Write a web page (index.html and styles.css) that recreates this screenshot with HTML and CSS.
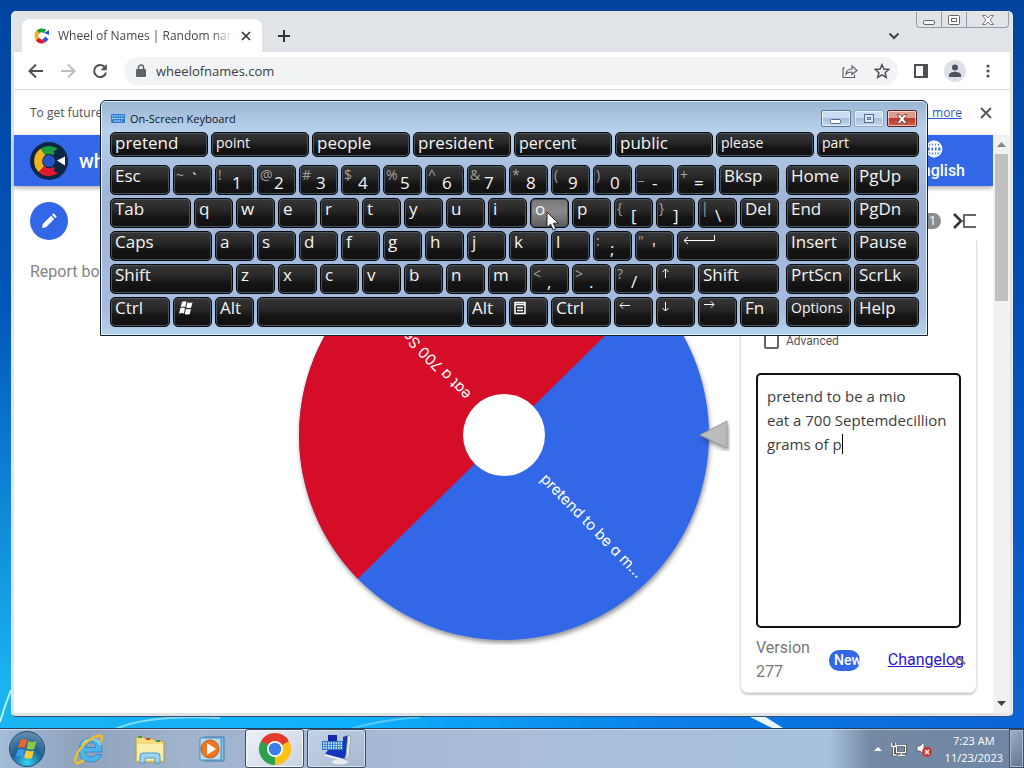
FILE: index.html
```html
<!DOCTYPE html>
<html lang="en">
<head>
<meta charset="utf-8">
<title>Wheel of Names</title>
<link rel="stylesheet" href="styles.css">
</head>
<body class="desktop">
<svg class="streaks" viewBox="0 0 1024 768" preserveAspectRatio="none" aria-hidden="true">
  <path d="M0 722Q5 705 11 690" stroke="#b9f3d8" stroke-width="2" fill="none"/>
  <path d="M115 729Q150 714 220 718" stroke="#7fdcfb" stroke-width="2" fill="none"/>
  <path d="M350 729Q380 720 420 717" stroke="#57c8fa" stroke-width="2" fill="none"/>
  <path d="M748 716L776 730H786L764 716Z" fill="#e8f6ff"/>
</svg>

<main class="browser">
  <div class="tabstrip">
    <div class="tab">
      <svg class="favicon" viewBox="0 0 16 16" aria-hidden="true"><g fill="none" stroke-width="4"><path d="M11 3.5A5.5 5.5 0 0 0 4 4" stroke="#1b9a3e"/><path d="M4 4A5.5 5.5 0 0 0 3.5 11" stroke="#f2b01d"/><path d="M3.5 11A5.5 5.5 0 0 0 10 13" stroke="#df1b2c"/><path d="M10 13L13 10" stroke="#2854d8"/></g><path d="M10 5l5-3v5z" fill="#2854d8"/></svg>
      <span class="tab-title">Wheel of Names | Random name picker</span>
      <button class="icon-btn" aria-label="Close tab"><svg width="10" height="10" viewBox="0 0 10 10"><path d="M1 1l8 8M9 1L1 9" stroke="#333" stroke-width="1.700"/></svg></button>
    </div>
    <button class="icon-btn new-tab" aria-label="New tab"><svg width="14" height="14" viewBox="0 0 14 14"><path d="M7 1v12M1 7h12" stroke="#333" stroke-width="2"/></svg></button>
    <button class="icon-btn tab-search" aria-label="Search tabs"><svg width="12" height="8" viewBox="0 0 12 8"><path d="M1.500 1.500L6 6l4.500-4.500" fill="none" stroke="#444" stroke-width="2"/></svg></button>
    <div class="caption">
      <button aria-label="Minimize"><svg width="14" height="14" viewBox="0 0 14 14"><rect x="1.500" y="7.500" width="11" height="4" rx="1.500" fill="#fff" stroke="#666"/></svg></button>
      <button aria-label="Maximize"><svg width="14" height="14" viewBox="0 0 14 14"><rect x="1.500" y="2.500" width="11" height="9" rx="1" fill="#fff" stroke="#666"/><rect x="4.500" y="5.500" width="5" height="3" fill="none" stroke="#666"/></svg></button>
      <button class="wide" aria-label="Close"><svg width="14" height="14" viewBox="0 0 14 14"><path d="M1.500 2.500h3L7 5l2.500-2.500h3L9 7l3.500 4.500h-3L7 9l-2.500 2.500h-3L5 7z" fill="#fff" stroke="#777"/></svg></button>
    </div>
  </div>

  <div class="toolbar">
    <button class="icon-btn" aria-label="Back"><svg width="16" height="16" viewBox="0 0 16 16"><path d="M15 8H2M8 1.500L1.500 8 8 14.500" fill="none" stroke="#4d5156" stroke-width="2"/></svg></button>
    <button class="icon-btn" aria-label="Forward"><svg width="16" height="16" viewBox="0 0 16 16"><path d="M1 8h13M8 1.500L14.500 8 8 14.500" fill="none" stroke="#bcbec1" stroke-width="2"/></svg></button>
    <button class="icon-btn" aria-label="Reload"><svg width="16" height="16" viewBox="0 0 16 16"><path d="M13 4.500A6 6 0 1 0 14 9.500" fill="none" stroke="#4d5156" stroke-width="2"/><path d="M14.800 1v6.200H8.600z" fill="#4d5156"/></svg></button>
    <div class="omnibox">
      <svg width="10" height="14" viewBox="0 0 10 14" aria-hidden="true"><rect y="5" width="10" height="8" rx="1" fill="#5f6368"/><path d="M2.500 6V3.500a2.500 2.500 0 0 1 5 0V6" fill="none" stroke="#5f6368" stroke-width="1.500"/></svg>
      <input class="url" type="text" value="wheelofnames.com" aria-label="Address">
      <button class="icon-btn" aria-label="Share"><svg width="16" height="16" viewBox="0 0 16 16"><path d="M3 5H1v9.500h11.500V12M4 11c.5-3.500 3-5 6-5V3l5 4.500-5 4V9c-3 0-4.500.5-6 2z" fill="none" stroke="#5f6368" stroke-width="1.200"/></svg></button>
      <button class="icon-btn" aria-label="Bookmark"><svg width="16" height="16" viewBox="0 0 16 16"><path d="M8 1.700l1.900 4.400 4.800.4-3.600 3.200 1.100 4.700L8 11.900l-4.200 2.500 1.100-4.700-3.600-3.200 4.800-.4z" fill="none" stroke="#4d5156" stroke-width="1.500"/></svg></button>
    </div>
    <button class="icon-btn" aria-label="Side panel"><svg width="14" height="14" viewBox="0 0 14 14"><path d="M1 1h12v12H1z" fill="none" stroke="#4d5156" stroke-width="2"/><path d="M9 1h4v12H9z" fill="#4d5156"/></svg></button>
    <button class="icon-btn" aria-label="Profile"><svg width="22" height="22" viewBox="0 0 22 22"><circle cx="11" cy="11" r="11" fill="#dde1e7"/><circle cx="11" cy="7.500" r="3" fill="#4d5460"/><path d="M5 17v-2c0-2.500 4-3.300 6-3.300s6 .8 6 3.300v2z" fill="#4d5460"/></svg></button>
    <button class="icon-btn menu" aria-label="Menu"><svg width="4" height="14" viewBox="0 0 4 14"><g fill="#4d5156"><circle cx="2" cy="2" r="1.600"/><circle cx="2" cy="7" r="1.600"/><circle cx="2" cy="12" r="1.600"/></g></svg></button>
  </div>

  <div class="infobar">
    <span>To get future</span>
    <a class="learn" href="#more">Learn more</a>
    <button class="icon-btn" aria-label="Dismiss"><svg width="12" height="12" viewBox="0 0 12 12"><path d="M1 1l10 10M11 1L1 11" stroke="#555" stroke-width="1.800"/></svg></button>
  </div>

  <div class="viewport">
    <div class="page">
      <header class="site-header">
        <svg width="38" height="38" viewBox="0 0 38 38" aria-hidden="true"><circle cx="19" cy="19" r="19" fill="#0d2646"/><g fill="none" stroke-width="8"><path d="M12.800 10.100A11 11 0 0 1 25.500 10.100" stroke="#1d9c3f"/><path d="M11.500 27A11 11 0 0 1 12.800 10.100" stroke="#f0b41c"/><path d="M25.500 28A11 11 0 0 1 11.500 27" stroke="#df1b2c"/></g><circle cx="19" cy="19" r="6" fill="#2454c4"/><path d="M25 12l5-3M25 26l5 3" stroke="#0d2646" stroke-width="6"/><path d="M27 18.500l8-4v9z" fill="#fff"/></svg>
        <strong class="brand">wheel</strong>
        <button class="lang"><svg width="18" height="18" viewBox="0 0 18 18" aria-hidden="true"><g fill="none" stroke="#fff" stroke-width="1.800"><circle cx="9" cy="9" r="7.500"/><ellipse cx="9" cy="9" rx="3.500" ry="7.500"/><path d="M2 6.500h14M2 11.500h14M9 1v16"/></g></svg>English</button>
      </header>

      <div class="content">
        <aside class="tools">
          <button class="edit" aria-label="Customize"><svg width="20" height="20" viewBox="0 0 20 20"><path d="M3 17l.8-4L12 4.800 15.200 8 7 16.200zM13 3.800l1.600-1.600 3.200 3.200L16.200 7z" fill="#fff"/></svg></button>
          <a class="report" href="#report">Report bo</a>
        </aside>

        <svg class="wheel" viewBox="0 0 450 420" role="img" aria-label="Wheel">
          <defs>
            <filter id="shade" x="-10%" y="-10%" width="120%" height="120%"><feDropShadow dx="1" dy="3" stdDeviation="2" flood-color="#333" flood-opacity=".5"/></filter>
          </defs>
          <g filter="url(#shade)">
            <circle cx="214" cy="210" r="205" fill="#3267e8"/>
            <path d="M360.200 66.300A205 205 0 0 0 67.800 66.300A205 205 0 0 0 67.800 353.700z" fill="#d60f26"/>
          </g>
          <circle cx="214" cy="210" r="41" fill="#fff"/>
          <g class="wheel-text">
            <text transform="translate(214 210) rotate(45.500)" x="57" y="6">pretend to be a m...</text>
            <text transform="translate(214 210) rotate(225.500)" x="52" y="6">eat a 700 Se</text>
          </g>
          <path d="M410 210l27-14v27z" fill="#bbb" stroke="#999" filter="url(#shade)"/>
        </svg>

        <section class="panel">
          <div class="panel-top">
            <span class="badge">1</span>
            <button class="icon-btn" aria-label="Hide panel"><svg width="24" height="18" viewBox="0 0 24 18"><path d="M1 2l7 7-7 7" fill="none" stroke="#333" stroke-width="2.600"/><path d="M23 3H11v12h12M8 9h3" fill="none" stroke="#666" stroke-width="2"/></svg></button>
          </div>
          <div class="card">
            <label class="advanced"><input type="checkbox">Advanced</label>
            <div class="entry">
              <textarea aria-label="Entries" spellcheck="false">pretend to be a mio
eat a 700 Septemdecillion
grams of p</textarea>
              <i class="caret"></i>
            </div>
            <footer class="card-foot">
              <span class="version">Version 277</span>
              <span class="new">New</span>
              <a class="changelog" href="#changelog">Changelog</a>
              <svg class="chev" width="14" height="10" viewBox="0 0 14 10" aria-hidden="true"><path d="M1 8l6-6 6 6" fill="none" stroke="#777" stroke-width="2"/></svg>
            </footer>
          </div>
        </section>
      </div>
    </div>
    <div class="scroll" aria-hidden="true">
      <svg width="9" height="5" viewBox="0 0 9 5"><path d="M0 5l4.500-5L9 5z" fill="#888"/></svg>
      <div class="thumb"></div>
      <svg class="down" width="9" height="5" viewBox="0 0 9 5"><path d="M0 0h9L4.500 5z" fill="#444"/></svg>
    </div>
  </div>
</main>

<section class="osk">
  <div class="osk-title">
    <svg width="14" height="9" viewBox="0 0 14 9" aria-hidden="true"><rect width="14" height="9" rx="1" fill="#2c7fd0"/><path d="M1 2h12M1 4.500h12M3 7h8" stroke="#e6f3ff" stroke-dasharray="1.500 .8"/></svg>
    <span>On-Screen Keyboard</span>
    <div class="osk-caption">
      <button aria-label="Minimize keyboard"><svg width="14" height="14" viewBox="0 0 14 14"><rect x="1.500" y="7.500" width="10" height="4" rx="1" fill="#fff" stroke="#556b8a"/></svg></button>
      <button class="dim" aria-label="Maximize keyboard"><svg width="14" height="14" viewBox="0 0 14 14"><rect x="2.500" y="2.500" width="9" height="8" fill="#dce8f5" stroke="#556b8a"/><rect x="5.500" y="5.500" width="3" height="2" fill="none" stroke="#556b8a"/></svg></button>
      <button class="red" aria-label="Close keyboard"><svg width="14" height="14" viewBox="0 0 14 14"><path d="M2 2.500h3L7 5l2-2.500h3L8.800 7l3.200 4.500H9L7 9l-2 2.500H2L5.200 7z" fill="#fff" stroke="#6d3838" stroke-width=".8"/></svg></button>
    </div>
  </div>
  <div class="predict">
    <button class="key">pretend</button><button class="key small">point</button><button class="key">people</button><button class="key">president</button><button class="key mid">percent</button><button class="key">public</button><button class="key small">please</button><button class="key small">part</button>
  </div>
  <div class="boards">
    <div class="board">
      <div class="row">
        <button class="key k60">Esc</button><button class="key two flat"><sup>~</sup><b>`</b></button><button class="key two"><sup>!</sup><b>1</b></button><button class="key two"><sup>@</sup><b>2</b></button><button class="key two"><sup>#</sup><b>3</b></button><button class="key two"><sup>$</sup><b>4</b></button><button class="key two"><sup>%</sup><b>5</b></button><button class="key two"><sup>^</sup><b>6</b></button><button class="key two"><sup>&amp;</sup><b>7</b></button><button class="key two"><sup>*</sup><b>8</b></button><button class="key two"><sup>(</sup><b>9</b></button><button class="key two"><sup>)</sup><b>0</b></button><button class="key two"><sup>_</sup><b>-</b></button><button class="key two"><sup>+</sup><b>=</b></button><button class="key k60">Bksp</button>
      </div>
      <div class="row">
        <button class="key k81">Tab</button><button class="key">q</button><button class="key">w</button><button class="key">e</button><button class="key">r</button><button class="key">t</button><button class="key">y</button><button class="key">u</button><button class="key">i</button><button class="key hover">o</button><button class="key">p</button><button class="key two"><sup>{</sup><b>[</b></button><button class="key two"><sup>}</sup><b>]</b></button><button class="key two"><sup>|</sup><b>\</b></button><button class="key">Del</button>
      </div>
      <div class="row">
        <button class="key k102">Caps</button><button class="key">a</button><button class="key">s</button><button class="key">d</button><button class="key">f</button><button class="key">g</button><button class="key">h</button><button class="key">j</button><button class="key">k</button><button class="key">l</button><button class="key two"><sup>:</sup><b>;</b></button><button class="key two"><sup>"</sup><b>'</b></button><button class="key k102" aria-label="Enter"><svg width="34" height="16" viewBox="0 0 34 16"><path d="M32.500 3v5.500H2M6 5L2 8.500 6 12" fill="none" stroke="#fff"/></svg></button>
      </div>
      <div class="row">
        <button class="key k123">Shift</button><button class="key">z</button><button class="key">x</button><button class="key">c</button><button class="key">v</button><button class="key">b</button><button class="key">n</button><button class="key">m</button><button class="key two"><sup>&lt;</sup><b>,</b></button><button class="key two"><sup>&gt;</sup><b>.</b></button><button class="key two"><sup>?</sup><b>/</b></button><button class="key" aria-label="Up"><svg width="10" height="16" viewBox="0 0 10 16"><path d="M4.500 13V4M1.500 7L4.500 4l3 3" fill="none" stroke="#fff"/></svg></button><button class="key k81">Shift</button>
      </div>
      <div class="row">
        <button class="key k60">Ctrl</button><button class="key" aria-label="Windows"><svg width="16" height="18" viewBox="0 0 16 18"><path d="M4 4q2-1.500 4.500-.3L7.300 9Q5 8 2.700 9.200zM9.500 4.200q2.500 1.200 5 0L13.200 9.500q-2.500 1-5 0zM2.500 10q2.300-1 4.500.2L6 15.500q-2.500-1.200-5 0zM8 10.800q2.500 1 5 0L11.800 16q-2.500 1-5 0z" fill="#fff"/></svg></button><button class="key">Alt</button><button class="key k207" aria-label="Space"></button><button class="key">Alt</button><button class="key" aria-label="Menu key"><svg width="12" height="17" viewBox="0 0 12 17"><path d="M1 4.500h10v11H1zM1 6.500h10M3 9.500h6M3 12.500h6" fill="none" stroke="#fff" stroke-width="1.500"/></svg></button><button class="key k60">Ctrl</button><button class="key" aria-label="Left"><svg width="12" height="16" viewBox="0 0 12 16"><path d="M11 7.500H1M4 4.500L1 7.500l3 3" fill="none" stroke="#fff"/></svg></button><button class="key" aria-label="Down"><svg width="10" height="16" viewBox="0 0 10 16"><path d="M4.500 4v9M1.500 10l3 3 3-3" fill="none" stroke="#fff"/></svg></button><button class="key" aria-label="Right"><svg width="12" height="16" viewBox="0 0 12 16"><path d="M1 6.500h10M8 3.500l3 3-3 3" fill="none" stroke="#fff"/></svg></button><button class="key">Fn</button>
      </div>
    </div>
    <div class="navpad">
      <button class="key">Home</button><button class="key">PgUp</button><button class="key">End</button><button class="key">PgDn</button><button class="key">Insert</button><button class="key">Pause</button><button class="key">PrtScn</button><button class="key">ScrLk</button><button class="key small">Options</button><button class="key">Help</button>
    </div>
  </div>
</section>

<svg class="pointer" width="13" height="20" viewBox="0 0 13 20" aria-hidden="true"><path d="M1 1v15.500l3.600-3.300 2.600 5.800 2.600-1.200-2.500-5.600h4.900z" fill="#fff" stroke="#222"/></svg>

<nav class="taskbar">
  <button class="orb" aria-label="Start"><svg width="38" height="38" viewBox="0 0 38 38"><defs><radialGradient id="orb" cx=".5" cy=".9" r=".9"><stop offset="0" stop-color="#35d3f5"/><stop offset=".5" stop-color="#1c6296"/><stop offset="1" stop-color="#6c8fae"/></radialGradient></defs><circle cx="19" cy="19" r="17.500" fill="url(#orb)" stroke="#23496b"/><path d="M12.500 10.500q3-2.500 6.500-.5l-2 8q-3.500-1.500-7 .3z" fill="#f0652c"/><path d="M20.500 11q4 2 8-.3l-2 8q-4 1.800-8-.2z" fill="#8fc73e"/><path d="M9.500 20q3.500-1.800 7-.3l-1.800 7q-3.500-1.500-6.700.3z" fill="#35a0e8"/><path d="M18 20.300q4 2 8 .2l-2 7.500q-4 1.500-7.800-.5z" fill="#fdc92f"/></svg></button>
  <button class="task" aria-label="Internet Explorer"><svg width="34" height="34" viewBox="0 0 34 34"><path fill-rule="evenodd" d="M30 20H13.500q.5 5 5.500 5 3.500 0 5-2.500h5.500Q27 30 18.500 30 7 29 7 18 8 6 19 6q11.500 1 11 14zM13.500 15.500h10.500q-.5-5-5-5t-5.500 5z" fill="#4fb4ea" stroke="#2583c4" stroke-width=".8"/><path d="M10 13q3-6 9-6 7 0 9.500 6" fill="none" stroke="#a4e4fb" stroke-width="1.500"/><path d="M4 31C0 26 12 7 27 3.500c4-.5 3.500 3 1.500 6M4 31q3 1 8-3" fill="none" stroke="#f1bd2a" stroke-width="2.400"/></svg></button>
  <button class="task" aria-label="Explorer"><svg width="34" height="34" viewBox="0 0 34 34"><path d="M2 5h8l2 2h8l2 2h8v21H2z" fill="#f2dd82" stroke="#b99945"/><path d="M4 5h4M22 9h4" stroke="#3c9c57" stroke-width="2"/><path d="M12 7h4" stroke="#d04a2a" stroke-width="2"/><path d="M3 12h26v16H3z" fill="#faeeae"/><path d="M6 31v-7q0-3 3-3h14q3 0 3 3v7h-5v-5H11v5z" fill="#9bd2ee" stroke="#4b9cc9"/></svg></button>
  <button class="task" aria-label="Media Player"><svg width="34" height="34" viewBox="0 0 34 34"><path d="M8 5h20v24H8z" fill="#83bde0" stroke="#3d7ba8"/><path d="M4 6h21v22H4z" fill="#b8dcf0" stroke="#4b8ebb"/><circle cx="14" cy="17" r="9" fill="#ee7722" stroke="#c45c12"/><path d="M11 11l9 6-9 6z" fill="#fff"/></svg></button>
  <button class="task open" aria-label="Chrome"><svg width="34" height="34" viewBox="0 0 34 34"><path d="M17 17L3.100 9A16 16 0 0 1 30.900 9z" fill="#e33b2e"/><path d="M17 17L30.900 9A16 16 0 0 1 17 33z" fill="#fbc116"/><path d="M17 17v16A16 16 0 0 1 3.100 9z" fill="#2da24c"/><path d="M17 9h13.900L17 17zM10 21L3.100 9 17 17z" fill="#e33b2e"/><path d="M3.100 9L10 21l7-4z" fill="#2da24c"/><path d="M24 21l-7 12V17z" fill="#fbc116"/><circle cx="17" cy="17" r="8" fill="#fff"/><circle cx="17" cy="17" r="6.300" fill="#3b7ded"/></svg></button>
  <button class="task open soft" aria-label="On-Screen Keyboard"><svg width="34" height="34" viewBox="0 0 34 34"><path d="M8 3h9v6H8z" fill="#1327a8"/><path d="M23 5l6-2-2 21-4 3-18-5 3-4h15z" fill="#1a34b8"/><path d="M28 3l3 1-2 21-5 3 2-4z" fill="#e4e9f0" stroke="#9aa"/><path d="M5 22l19 5-1 2L5 24z" fill="#e9edf3"/><ellipse cx="20" cy="30" rx="8" ry="2.500" fill="#e8ecf1"/><rect x="2" y="9" width="21" height="9" fill="#2877c8"/><path d="M3 11h19M3 13.500h19M3 16h19" stroke="#eaf5ff" stroke-width="1.500" stroke-dasharray="1.500 1"/></svg></button>
  <div class="tray">
    <svg width="8" height="4" viewBox="0 0 8 4" aria-hidden="true"><path d="M0 4l4-4 4 4z" fill="#fff"/></svg>
    <svg width="16" height="16" viewBox="0 0 16 16" aria-hidden="true"><path d="M5.500 4.500h9v7h-9zM7 14.500h7M10.500 12v2M2.500 6v8h3M.8 1.500v4h4v-4" fill="none" stroke="#333" stroke-width="2.600"/><path d="M5.500 4.500h9v7h-9zM7 14.500h7M10.500 12v2M2.500 6v8h3M.8 1.500v4h4v-4" fill="none" stroke="#fff" stroke-width="1.300"/></svg>
    <svg width="16" height="16" viewBox="0 0 16 16" aria-hidden="true"><path d="M1 5h3l4-4v13l-4-4H1z" fill="#fff" stroke="#555" stroke-width=".8"/><circle cx="11" cy="11" r="5" fill="#d8322e"/><path d="M9 9l4 4M13 9l-4 4" stroke="#fff" stroke-width="1.600"/></svg>
    <div class="clock"><span>7:23 AM</span><span>11/23/2023</span></div>
  </div>
  <button class="peek" aria-label="Show desktop"></button>
</nav>
</body>
</html>
```
FILE: styles.css
```css
* { box-sizing: border-box; }

.desktop {
  margin: 0;
  height: 100vh;
  overflow: hidden;
  position: relative;
  display: flex;
  flex-direction: column;
  justify-content: flex-end;
  font-family: "Open Sans", "Noto Sans", sans-serif;
  background:
    linear-gradient(to bottom, rgba(0, 68, 160, 1) 0, rgba(0, 76, 180, .9) 40%, rgba(0, 110, 220, 0) 90%),
    linear-gradient(to right, #1bb4f2, #0fb0fb 35%, #0a80e8 65%, #0a62d4);
}
.streaks { position: absolute; inset: 0; width: 100%; height: 100%; }

button { font: inherit; margin: 0; padding: 0; }
svg { flex: none; display: block; }
.icon-btn { border: 0; background: none; display: flex; align-items: center; justify-content: center; }

/* Browser window */
.browser {
  position: absolute;
  inset: 11px 11px 51px 11px;
  display: flex;
  flex-direction: column;
  padding: 0 2px 3px;
  background: #e0e3e8;
  border: 1px solid #e8ecf2;
  border-bottom-color: #35506e;
  border-radius: 5px;
}
.tabstrip { height: 40px; flex: none; display: flex; align-items: flex-end; padding-left: 8px; }
.tab {
  width: 240px;
  height: 33px;
  display: flex;
  align-items: center;
  gap: 8px;
  padding: 0 11px 0 12px;
  background: #fff;
  border-radius: 8px 8px 0 0;
}
.favicon { width: 16px; height: 16px; }
.tab-title {
  flex: 1;
  overflow: hidden;
  white-space: nowrap;
  font-size: 12px;
  color: #45484c;
  -webkit-mask-image: linear-gradient(to right, #000 88%, transparent);
  mask-image: linear-gradient(to right, #000 88%, transparent);
}
.new-tab { width: 44px; height: 33px; }
.tab-search { margin-left: auto; width: 44px; height: 33px; }
.caption {
  align-self: flex-start;
  display: flex;
  margin-right: 1px;
  border: 1px solid #999da3;
  border-top: 0;
  border-radius: 0 0 4px 4px;
}
.caption button {
  width: 25px;
  height: 15px;
  border: 0;
  border-right: 1px solid #999da3;
  background: none;
  display: flex;
  align-items: center;
  justify-content: center;
}
.caption .wide { width: 41px; border-right: 0; }

.toolbar {
  height: 38px;
  flex: none;
  display: flex;
  align-items: center;
  gap: 16px;
  padding: 0 16px 0 14px;
  background: #fff;
  border-bottom: 1px solid #d8dade;
}
.omnibox {
  flex: 1;
  height: 28px;
  display: flex;
  align-items: center;
  gap: 16px;
  padding: 0 8px 0 12px;
  border-radius: 14px;
  background: #f1f3f4;
}
.menu { width: 12px; }
.url {
  flex: 1;
  min-width: 0;
  border: 0;
  padding: 0;
  margin-left: -6px;
  background: none;
  font: 13px "Open Sans", sans-serif;
  color: #3c4043;
}
.infobar {
  height: 45px;
  flex: none;
  display: flex;
  align-items: center;
  padding: 0 18px 0 16px;
  background: #fff;
  font-size: 12px;
  color: #4d5156;
}
.learn { margin-left: auto; margin-right: 18px; color: #2a5bd0; }

/* Page */
.viewport { flex: 1; min-height: 0; display: flex; background: #fff; }
.page { flex: 1; min-width: 0; display: flex; flex-direction: column; }
.site-header {
  height: 51px;
  flex: none;
  display: flex;
  align-items: center;
  padding: 0 28px 0 16px;
  background: #3267e8;
  color: #fff;
  box-shadow: 0 2px 5px rgba(0, 0, 0, .35);
}
.brand { margin-left: 11px; font: 500 20px Roboto, sans-serif; }
.lang {
  margin-left: auto;
  border: 0;
  background: none;
  color: #fff;
  font: 500 16px/22px Roboto, sans-serif;
  display: flex;
  flex-direction: column;
  align-items: center;
  gap: 2px;
}
.lang svg { margin-right: 9px; }
.content { flex: 1; min-height: 0; display: flex; padding: 16px 16px 20px; }
.tools { flex: 1; display: flex; flex-direction: column; align-items: flex-start; gap: 22px; }
.edit {
  width: 38px;
  height: 38px;
  border: 0;
  border-radius: 50%;
  background: #3267e8;
  display: flex;
  align-items: center;
  justify-content: center;
}
.report { font: 16px/20px Roboto, sans-serif; color: #858585; text-decoration: none; }
.wheel { width: 450px; height: 420px; margin-top: 23px; }
.wheel-text { font: 15px Inter, sans-serif; font-feature-settings: "cv11"; fill: #fff; }

.panel { width: 237px; display: flex; flex-direction: column; }
.panel-top {
  height: 38px;
  flex: none;
  display: flex;
  align-items: center;
  justify-content: flex-end;
  gap: 12px;
}
.badge {
  width: 20px;
  height: 16px;
  border-radius: 8px;
  background: #8c8c8c;
  color: #fff;
  font: 12px/16px Roboto, sans-serif;
  padding-right: 5px;
  text-align: right;
}
.card {
  flex: 1;
  display: flex;
  flex-direction: column;
  padding: 91px 16px 8px;
  border: 1px solid #e4e4e4;
  border-top: 0;
  border-radius: 0 0 8px 8px;
  box-shadow: 0 2px 2px rgba(0, 0, 0, .2);
}
.advanced {
  display: flex;
  align-items: center;
  gap: 7px;
  padding-left: 7px;
  font: 12px/20px Roboto, sans-serif;
  color: #555;
}
.advanced input {
  appearance: none;
  width: 15px;
  height: 15px;
  margin: 0;
  border: 2px solid #666;
  border-radius: 2px;
}
.entry { position: relative; flex: 1; margin: 22px -1px 0; display: flex; }
.entry textarea {
  flex: 1;
  min-width: 0;
  resize: none;
  overflow: hidden;
  border: 2px solid #111;
  border-radius: 5px;
  padding: 9px 0 9px 9px;
  font: 15px/24px "Open Sans", sans-serif;
  color: #3c3c3c;
  outline: 0;
}
.caret { position: absolute; left: 86px; top: 61px; width: 1px; height: 20px; background: #000; }
.card-foot {
  position: relative;
  display: flex;
  align-items: center;
  padding-top: 8px;
  margin: 0 -4px 0 -1px;
  font: 16px/24px Roboto, sans-serif;
  color: #777;
}
.version { width: 73px; padding-right: 12px; }
.new {
  width: 31px;
  height: 21px;
  padding-left: 5px;
  border-radius: 10px;
  overflow: hidden;
  background: #3267e8;
  color: #fff;
  font: 500 14px/21px Roboto, sans-serif;
}
.changelog { margin-left: auto; color: #2a12d8; }
.chev { position: absolute; right: -2px; bottom: 18px; }

.scroll {
  width: 17px;
  display: flex;
  flex-direction: column;
  align-items: center;
  gap: 7px;
  padding: 7px 0;
  background: #f1f1f1;
}
.thumb { width: 13px; height: 147px; background: #c0c0c0; }
.down { margin-top: auto; }

/* On-screen keyboard window */
.osk {
  position: absolute;
  left: 100px;
  right: 96px;
  top: 100px;
  padding: 0 8px 8px 9px;
  border: 1px solid #16202c;
  border-radius: 6px 6px 0 0;
  box-shadow: inset 0 0 0 1px #e4f1ff;
  background: linear-gradient(#9ab6d4, #b8d0ec 30px, #9fb6d8 90px, #a6bbe0 210px, #b4d4ea);
}
.osk-title {
  height: 31px;
  display: flex;
  align-items: center;
  gap: 5px;
  padding-top: 4px;
  padding-left: 1px;
  font-size: 11px;
  color: #101820;
}
.osk-caption { margin-left: auto; display: flex; gap: 3px; padding-right: 2px; }
.osk-caption button {
  width: 30px;
  height: 17px;
  display: flex;
  align-items: center;
  justify-content: center;
  border: 1px solid #5a7496;
  border-radius: 2px;
  background: linear-gradient(#c9dcf1 45%, #a3bddb 50%, #c2d9f0);
  box-shadow: inset 0 0 0 1px rgba(255, 255, 255, .6);
}
.osk-caption .dim { border-color: #8fa8c6; }
.osk-caption .red { border-color: #5e2222; background: linear-gradient(#dc9a90 45%, #b93a2a 50%, #d0604c); }
.predict { display: grid; grid-template-columns: repeat(7, 98fr) 102fr; gap: 3px; height: 25px; }
.boards { display: flex; gap: 7px; margin-top: 8px; }
.board { flex: 669 1 0; min-width: 0; display: flex; flex-direction: column; gap: 3px; }
.row { display: flex; gap: 3px; height: 30px; }
.navpad {
  flex: 133 1 0;
  min-width: 0;
  display: grid;
  grid-template-columns: 1fr 1fr;
  grid-auto-rows: 30px;
  gap: 3px;
}
/* Each key's border and padding take 6px, so the grow factors leave that out. */
.key {
  flex: 33 1 0;
  min-width: 0;
  display: flex;
  align-items: flex-start;
  padding: 0 0 0 4px;
  overflow: hidden;
  white-space: nowrap;
  text-align: left;
  color: #f4f4f4;
  font: 17px/20px "Open Sans", sans-serif;
  border: 1px solid #05080b;
  border-radius: 5px;
  background: linear-gradient(#363636, #282828 40%, #141414 65%, #101010);
  box-shadow: inset 0 0 0 1px #46545f;
}
.k60 { flex-grow: 54; }
.k81 { flex-grow: 75; }
.k102 { flex-grow: 96; }
.k123 { flex-grow: 117; }
.k207 { flex-grow: 201; }
.small { font-size: 14px; }
.mid { font-size: 16px; }
.hover { background: linear-gradient(#777, #8a8a8a 45%, #5a5a5a); }
.two { padding: 0 2px; }
.two sup { font-size: 14px; line-height: 18px; vertical-align: top; color: #a0a0a0; width: 14px; }
.two b { font-weight: 400; line-height: 34px; }
.flat sup { width: 16px; }
.flat b { line-height: 26px; }
.pointer { position: absolute; left: 546px; top: 211px; }

/* Taskbar */
.taskbar {
  position: relative;
  height: 40px;
  display: flex;
  align-items: stretch;
  gap: 3px;
  padding-left: 8px;
  border-top: 1px solid #22415f;
  background: linear-gradient(to right, #a3bcd8, #8fa2bb 80px, #9fb3cd 180px, #a9bdd9 500px, #a6c0dd 830px, #7389a4 870px, #6f87a6);
  box-shadow: inset 0 1px 0 rgba(255, 255, 255, .5);
}
.orb { width: 38px; margin-right: 10px; border: 0; background: none; }
.task {
  width: 59px;
  display: flex;
  align-items: center;
  justify-content: center;
  border: 0;
  background: none;
}
.open {
  border: 1px solid #3c4c62;
  border-radius: 3px;
  background: linear-gradient(135deg, #eef2f8, #c9d3e2);
  box-shadow: inset 0 0 0 1px #f6f9fd;
}
.soft { background: linear-gradient(135deg, #c6d3e6, #a5b7d0); box-shadow: inset 0 0 0 1px #d4e0ef; }
.tray { margin-left: auto; display: flex; align-items: center; gap: 9px; padding-right: 3px; }
.clock {
  display: flex;
  flex-direction: column;
  align-items: center;
  padding-left: 4px;
  font-size: 11px;
  line-height: 17px;
  color: #fff;
}
.peek {
  width: 15px;
  border: 1px solid #3d5068;
  background: linear-gradient(135deg, #9db0c6, #5f7690);
  box-shadow: inset 0 0 0 1px #a8bace;
}
```
